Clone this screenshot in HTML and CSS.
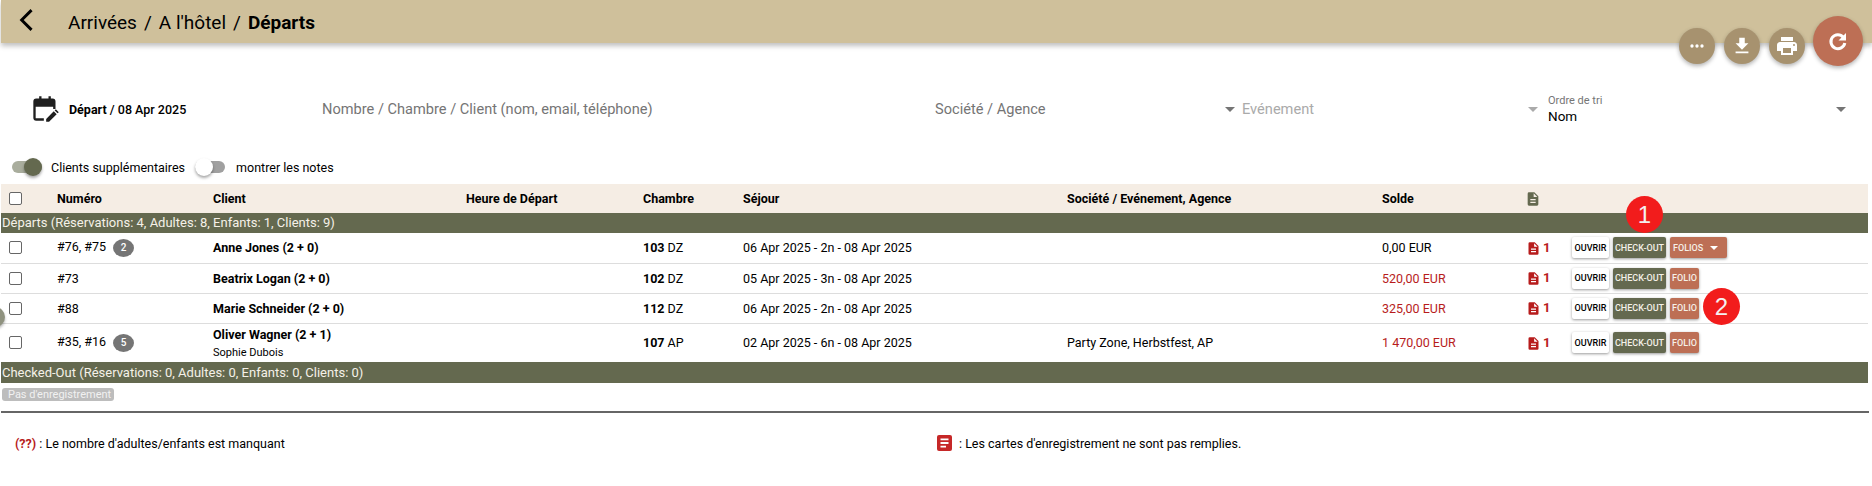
FILE: index.html
```html
<!DOCTYPE html>
<html lang="fr">
<head>
<meta charset="utf-8">
<title>Départs</title>
<link rel="stylesheet" href="styles.css">
</head>
<body>
<header class="topbar">
  <svg class="back" viewBox="0 0 24 24" width="32" height="32"><path d="M15.4 4.600 8 12l7.400 7.400" fill="none" stroke="#000" stroke-width="2.200"/></svg>
  <div class="crumbs"><span>Arrivées</span><span>/</span><span>A l'hôtel</span><span>/</span><b>Départs</b></div>
</header>
<div class="fabs">
  <button class="fab"><svg viewBox="0 0 24 24" width="20" height="20"><path fill="#fff" d="M6 10a2 2 0 1 0 0 4 2 2 0 0 0 0-4zm6 0a2 2 0 1 0 0 4 2 2 0 0 0 0-4zm6 0a2 2 0 1 0 0 4 2 2 0 0 0 0-4z"/></svg></button>
  <button class="fab"><svg viewBox="0 0 24 24" width="22" height="22"><path fill="#fff" d="M19 9h-4V3H9v6H5l7 7 7-7zM5 18v2h14v-2H5z"/></svg></button>
  <button class="fab"><svg viewBox="0 0 24 24" width="24" height="24"><path fill="#fff" d="M19 8H5c-1.660 0-3 1.340-3 3v6h4v4h12v-4h4v-6c0-1.660-1.340-3-3-3zm-3 11H8v-5h8v5zm3-7a1 1 0 1 1 0-2 1 1 0 0 1 0 2zm-1-9H6v4h12V3z"/></svg></button>
  <button class="fab fab-main"><svg viewBox="0 0 24 24" width="24" height="24"><path fill="none" stroke="#fff" stroke-width="3" d="M17.300 8.200A7 7 0 1 0 18.800 14"/><path fill="#fff" d="M20 4v7.500h-7.500z"/></svg></button>
</div>

<section class="filters">
  <div class="date">
    <svg viewBox="0 0 24 24" width="28" height="28"><path fill="#1f1f1f" d="M7 1h2v2h6V1h2v2h1.500A2.500 2.500 0 0 1 21 5.500V12h-2v-2H4v10h7v2H4.500A2.500 2.500 0 0 1 2 19.500v-14A2.500 2.500 0 0 1 4.500 3H7V1z"/><path fill="#1f1f1f" d="M13 23v-2.500l6.500-6.500 2.500 2.500-6.500 6.500H13zM20.300 13.200l1-1 2.500 2.500-1 1-2.500-2.500z"/></svg>
    <span><b>Départ</b> / 08 Apr 2025</span>
  </div>
  <div class="field field-search">Nombre / Chambre / Client (nom, email, téléphone)</div>
  <div class="field field-company">Société / Agence<i class="caret"></i></div>
  <div class="field field-event">Evénement<i class="caret caret-light"></i></div>
  <div class="field-sort">
    <div class="sort-text"><small>Ordre de tri</small><span>Nom</span></div>
    <i class="caret caret-dark"></i>
  </div>
</section>

<section class="toggles">
  <span class="toggle on"><i></i></span><span class="toggle-label">Clients supplémentaires</span>
  <span class="toggle off"><i></i></span><span class="toggle-label">montrer les notes</span>
</section>

<table class="grid">
  <thead>
    <tr>
      <th class="c-check"><span class="cb"></span></th>
      <th class="c-num">Numéro</th>
      <th class="c-client">Client</th>
      <th class="c-time">Heure de Départ</th>
      <th class="c-room">Chambre</th>
      <th class="c-stay">Séjour</th>
      <th class="c-comp">Société / Evénement, Agence</th>
      <th class="c-bal">Solde</th>
      <th class="c-doc"><svg viewBox="0 0 24 24" width="16" height="16"><path fill="#64694f" d="M14 2H6a2 2 0 0 0-2 2v16a2 2 0 0 0 2 2h12a2 2 0 0 0 2-2V8l-6-6zm2 16H8v-2h8v2zm0-4H8v-2h8v2zm-3-5V3.500L18.500 9H13z"/></svg></th>
      <th class="c-act"></th>
    </tr>
  </thead>
  <tbody>
    <tr class="group"><td colspan="10">Départs (Réservations: 4, Adultes: 8, Enfants: 1, Clients: 9)</td></tr>
    <tr>
      <td><span class="cb"></span></td>
      <td>#76, #75 <span class="count">2</span></td>
      <td><b>Anne Jones (2 + 0)</b></td>
      <td></td>
      <td><b>103</b> DZ</td>
      <td>06 Apr 2025 - 2n - 08 Apr 2025</td>
      <td></td>
      <td>0,00 EUR</td>
      <td class="doc"><svg viewBox="0 0 24 24" width="15" height="15"><path fill="#b71c1c" d="M14 2H6a2 2 0 0 0-2 2v16a2 2 0 0 0 2 2h12a2 2 0 0 0 2-2V8l-6-6zm2 16H8v-2h8v2zm0-4H8v-2h8v2zm-3-5V3.500L18.500 9H13z"/></svg><b>1</b></td>
      <td class="acts"><button class="btn btn-w">OUVRIR</button><button class="btn btn-g">CHECK-OUT</button><button class="btn btn-r btn-drop">FOLIOS<i class="caret caret-white"></i></button></td>
    </tr>
    <tr>
      <td><span class="cb"></span></td>
      <td>#73</td>
      <td><b>Beatrix Logan (2 + 0)</b></td>
      <td></td>
      <td><b>102</b> DZ</td>
      <td>05 Apr 2025 - 3n - 08 Apr 2025</td>
      <td></td>
      <td class="due">520,00 EUR</td>
      <td class="doc"><svg viewBox="0 0 24 24" width="15" height="15"><path fill="#b71c1c" d="M14 2H6a2 2 0 0 0-2 2v16a2 2 0 0 0 2 2h12a2 2 0 0 0 2-2V8l-6-6zm2 16H8v-2h8v2zm0-4H8v-2h8v2zm-3-5V3.500L18.500 9H13z"/></svg><b>1</b></td>
      <td class="acts"><button class="btn btn-w">OUVRIR</button><button class="btn btn-g">CHECK-OUT</button><button class="btn btn-r">FOLIO</button></td>
    </tr>
    <tr>
      <td><span class="cb"></span></td>
      <td>#88</td>
      <td><b>Marie Schneider (2 + 0)</b></td>
      <td></td>
      <td><b>112</b> DZ</td>
      <td>06 Apr 2025 - 2n - 08 Apr 2025</td>
      <td></td>
      <td class="due">325,00 EUR</td>
      <td class="doc"><svg viewBox="0 0 24 24" width="15" height="15"><path fill="#b71c1c" d="M14 2H6a2 2 0 0 0-2 2v16a2 2 0 0 0 2 2h12a2 2 0 0 0 2-2V8l-6-6zm2 16H8v-2h8v2zm0-4H8v-2h8v2zm-3-5V3.500L18.500 9H13z"/></svg><b>1</b></td>
      <td class="acts"><button class="btn btn-w">OUVRIR</button><button class="btn btn-g">CHECK-OUT</button><button class="btn btn-r">FOLIO</button></td>
    </tr>
    <tr class="tall">
      <td><span class="cb"></span></td>
      <td>#35, #16 <span class="count">5</span></td>
      <td><b>Oliver Wagner (2 + 1)</b><div class="sub">Sophie Dubois</div></td>
      <td></td>
      <td><b>107</b> AP</td>
      <td>02 Apr 2025 - 6n - 08 Apr 2025</td>
      <td>Party Zone, Herbstfest, AP</td>
      <td class="due">1 470,00 EUR</td>
      <td class="doc"><svg viewBox="0 0 24 24" width="15" height="15"><path fill="#b71c1c" d="M14 2H6a2 2 0 0 0-2 2v16a2 2 0 0 0 2 2h12a2 2 0 0 0 2-2V8l-6-6zm2 16H8v-2h8v2zm0-4H8v-2h8v2zm-3-5V3.500L18.500 9H13z"/></svg><b>1</b></td>
      <td class="acts"><button class="btn btn-w">OUVRIR</button><button class="btn btn-g">CHECK-OUT</button><button class="btn btn-r">FOLIO</button></td>
    </tr>
    <tr class="group"><td colspan="10">Checked-Out (Réservations: 0, Adultes: 0, Enfants: 0, Clients: 0)</td></tr>
  </tbody>
</table>

<div class="empty"><span>Pas d'enregistrement</span></div>
<hr class="rule">
<footer class="legend">
  <div class="legend-a"><b>(??)</b> : Le nombre d'adultes/enfants est manquant</div>
  <div class="legend-b"><i class="legend-icon"><svg viewBox="0 0 15 16" width="15" height="16"><path fill="#fff" d="M3.500 3.500h8v1.800h-8zM3.500 7.100h8v1.800h-8zM3.500 10.700h5.500v1.800h-5.500z"/></svg></i> : Les cartes d'enregistrement ne sont pas remplies.</div>
</footer>

<span class="marker m1">1</span>
<span class="marker m2">2</span>
<span class="edge-dot"></span>
</body>
</html>
```

FILE: styles.css
```css
* { box-sizing: border-box; }
html, body { margin: 0; padding: 0; }
body {
  width: 1872px;
  height: 486px;
  overflow: hidden;
  position: relative;
  background: #fff;
  font-family: Roboto, "Liberation Sans", sans-serif;
  font-size: 12.500px;
  color: #000;
}
.topbar {
  height: 43px;
  margin-left: 1px;
  background: #cfc09b;
  box-shadow: 0 3px 5px rgba(0,0,0,.25);
  display: flex;
  align-items: center;
  padding-left: 10px;
}
.back { margin-top: -4px; }
.crumbs { margin-left: 25px; font-size: 19px; margin-top: 2px; display: flex; gap: 7px; }
.crumbs b { font-weight: 700; }

.fabs {
  position: absolute;
  top: 16px;
  left: 1679px;
  display: flex;
  align-items: center;
  gap: 9px;
}
.fab {
  width: 36px;
  height: 36px;
  border: 0;
  padding: 0;
  border-radius: 50%;
  background: #a7926f;
  box-shadow: 0 2px 4px rgba(0,0,0,.3);
  display: flex;
  align-items: center;
  justify-content: center;
  margin-top: 9px;
}
.fab-main { width: 50px; height: 50px; background: #bd6f55; margin: 0 0 0 -1px; }

.filters {
  display: flex;
  align-items: center;
  height: 44px;
  margin-top: 44px;
  padding-left: 31px;
}
.date { width: 291px; display: flex; align-items: center; gap: 10px; font-size: 12.500px; font-weight: 500; flex: none; }
.field { color: #757575; font-size: 14.600px; flex: none; position: relative; }
.field-search { width: 613px; }
.field-company { width: 307px; }
.field-event { width: 306px; color: #aaa; }
.caret {
  display: inline-block;
  width: 0; height: 0;
  border-left: 5px solid transparent;
  border-right: 5px solid transparent;
  border-top: 5px solid #757575;
}
.field-company .caret { position: absolute; left: 290px; top: 7px; }
.field-event .caret { position: absolute; left: 286px; top: 7px; }
.caret-light { border-top-color: #aaa; }
.field-sort { width: 305px; flex: none; display: flex; align-items: center; justify-content: space-between; padding-right: 7px; }
.sort-text { display: flex; flex-direction: column; }
.sort-text small { font-size: 11px; color: #757575; line-height: 13px; }
.sort-text span { font-size: 13.500px; line-height: 18px; }

.toggles { display: flex; align-items: center; height: 20px; margin-top: 26px; padding-left: 12px; }
.toggle { position: relative; width: 30px; height: 12px; border-radius: 6px; flex: none; }
.toggle i {
  position: absolute; top: -3px;
  width: 18px; height: 18px; border-radius: 50%;
  box-shadow: 0 2px 3px rgba(0,0,0,.35);
}
.toggle.on { background: #a9ad9d; }
.toggle.on i { right: 0; background: #64694f; }
.toggle.off { background: #a0a0a0; margin-left: 10px; }
.toggle.off i { left: 0; background: #fff; }
.toggle-label { margin-left: 9px; }
.toggle.off + .toggle-label { margin-left: 11px; }

.grid {
  margin: 7px 0 0 1px;
  width: 1867px;
  table-layout: fixed;
  border-collapse: collapse;
}
.grid th {
  height: 29px;
  background: #f5ede4;
  font-size: 12.500px;
  font-weight: 700;
  text-align: left;
  padding: 0;
  vertical-align: middle;
}
.c-check { width: 56px; }
.c-num { width: 156px; }
.c-client { width: 253px; }
.c-time { width: 177px; }
.c-room { width: 100px; }
.c-stay { width: 324px; }
.c-comp { width: 315px; }
.c-bal { width: 146px; }
.c-doc { width: 44px; }
.grid th svg { display: block; margin-left: -3px; }
.grid td { padding: 0; height: 30px; border-bottom: 1px solid #ddd; vertical-align: middle; }
.grid tr.tall td { height: 39px; border-bottom: 0; }
.grid tr.group td {
  height: 20px;
  background: #64694f;
  color: #f5f1e8;
  font-size: 13px;
  line-height: 20px;
  padding-left: 1px;
  border-bottom: 0;
}
.grid tbody tr:last-child td { height: 21px; }
.grid th:first-child, .grid td:first-child { padding-left: 8px; }
.cb { display: block; width: 13px; height: 13px; border: 1px solid #666; border-radius: 2px; background: #fff; }
.count {
  display: inline-block;
  width: 21px; height: 18px;
  margin-left: 4px;
  border-radius: 50%;
  background: #757575;
  color: #fff;
  font-size: 10px;
  font-weight: 500;
  line-height: 18px;
  text-align: center;
  vertical-align: middle;
}
.sub { font-size: 11px; margin-top: 4px; }
.due { color: #b71c1c; }
.doc { white-space: nowrap; }
.doc svg { vertical-align: -4px; margin: 0 2px 0 -2px; }
.doc b { color: #b71c1c; font-size: 13px; font-weight: 700; }
.acts { white-space: nowrap; font-size: 0; }
.btn {
  height: 21px;
  border: 0;
  border-radius: 2px;
  padding: 0;
  margin-right: 4px;
  font-family: inherit;
  font-size: 9px;
  font-weight: 500;
  white-space: nowrap;
  box-shadow: 0 1px 3px rgba(0,0,0,.4);
  vertical-align: middle;
}
.btn-w { background: #fff; color: #000; width: 37px; }
.btn-g { background: #64694f; color: #f5f1e8; width: 53px; }
.btn-r { background: #bd6f55; color: #f5f1e8; width: 29px; }
.btn-drop { width: 57px; text-align: left; position: relative; padding-left: 3px; }
.caret-white { position: absolute; right: 9px; top: 9px; border-left-width: 4px; border-right-width: 4px; border-top: 4px solid #fff; }

.empty { padding: 5px 0 0 2px; line-height: 0; }
.empty span {
  display: inline-block;
  height: 13px; width: 112px;
  background: #bdbdbd;
  color: #f1f1f1;
  font-size: 11px;
  line-height: 13px;
  padding-left: 6px;
  border-radius: 3px;
}
.rule { margin: 10px 0 0 1px; height: 2px; border: 0; background: #666; width: 1868px; }
.legend { display: flex; align-items: center; height: 20px; margin-top: 20px; font-size: 12.500px; padding-left: 15px; }
.legend-a { width: 922px; flex: none; }
.legend-a b { color: #b71c1c; }
.legend-b { display: flex; align-items: center; gap: 7px; }
.legend-icon { display: block; width: 15px; height: 16px; background: #c62828; border-radius: 2px; }
.legend-icon svg { display: block; }

.marker {
  position: absolute;
  width: 37px; height: 37px;
  border-radius: 50%;
  background: #f21c1c;
  color: #f4f0f0;
  font-family: "Liberation Sans", sans-serif;
  font-size: 24px;
  line-height: 37px;
  text-align: center;
}
.m1 { left: 1626px; top: 196px; }
.m2 { left: 1703px; top: 288px; }
.edge-dot {
  position: absolute;
  left: -15px; top: 307px;
  width: 20px; height: 20px;
  border-radius: 50%;
  background: #8f927f;
  box-shadow: 0 2px 3px rgba(0,0,0,.3);
}
```
